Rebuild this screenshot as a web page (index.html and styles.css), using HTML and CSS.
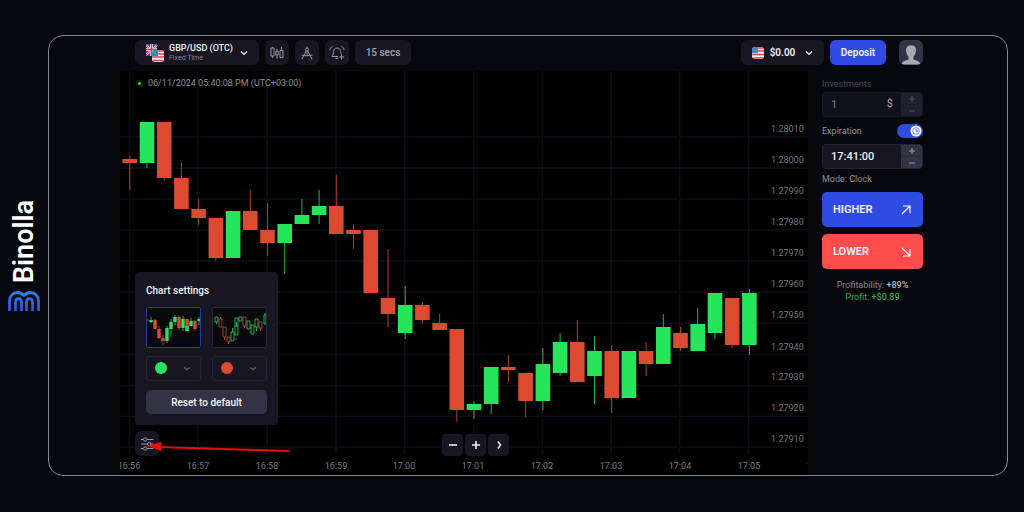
FILE: index.html
```html
<!DOCTYPE html>
<html lang="en">
<head>
<meta charset="utf-8">
<title>Binolla</title>
<meta name="viewport" content="width=device-width, initial-scale=1">
<link rel="stylesheet" href="styles.css">
</head>
<body>
<aside class="brand">
  <span class="brand-name">Binolla</span>
  <svg class="brand-logo" viewBox="0 0 32 20" aria-hidden="true">
    <defs><linearGradient id="logo" x1="0" y1="0" x2="0" y2="1"><stop offset="0" stop-color="#2b80e8"/><stop offset="1" stop-color="#3150e4"/></linearGradient></defs>
    <path d="M1.500 20V10C1.500 5 5 1.500 9.500 1.500C12.500 1.500 14.500 3 16 4.500C17.500 3 19.500 1.500 22.500 1.500C27 1.500 30.500 5 30.500 10V20M7.500 20V11C7.500 6.500 13.500 6.500 13.500 11V20M18.500 20V11C18.500 6.500 24.500 6.500 24.500 11V20" fill="none" stroke="url(#logo)" stroke-width="2.800"/>
  </svg>
</aside>
<main class="frame">
  <header class="topbar">
    <button class="pill pair" type="button">
      <svg class="flags" viewBox="0 0 18 18" aria-hidden="true">
        <rect width="11" height="12" rx="2" fill="#27479c"/>
        <path d="M0 1L11 11M11 1L0 11" stroke="#e8e9f2" stroke-width="2"/>
        <path d="M0 1L11 11M11 1L0 11" stroke="#d8364c" stroke-width="1"/>
        <path d="M5.500 0V12M0 5.500H11" stroke="#e8e9f2" stroke-width="3"/>
        <path d="M5.500 0V12M0 5.500H11" stroke="#d8364c" stroke-width="1.500"/>
        <rect x="6" y="6" width="12" height="12" rx="3" fill="#f1eef2"/>
        <path d="M8 7H17M6 10H18M6 13H18M7 16.500H17" stroke="#dc4155" stroke-width="1.600"/>
        <path d="M9 6H12V12H6V9A3 3 0 0 1 9 6Z" fill="#3f86c8"/>
      </svg>
      <span class="pair-text"><strong>GBP/USD (OTC)</strong><small>Fixed Time</small></span>
      <svg class="chev" viewBox="0 0 8 6" aria-hidden="true"><path d="M1 1.500L4 4.300L7 1.500"/></svg>
    </button>
    <button class="pill icon" type="button" aria-label="Chart type">
      <svg viewBox="0 0 16 16"><path d="M3.500 2V3M2 3H5V11H2ZM3.500 11V13M8 4V6.500M8 10V13.500M6.800 6.500H9.200V10H6.800ZM12.500 2V5M11 5.500H14V12.500H11Z"/></svg>
    </button>
    <button class="pill icon" type="button" aria-label="Drawing tools">
      <svg viewBox="0 0 16 16"><path d="M8 1.500V3M6.500 4.500A1.500 1.500 0 1 0 9.500 4.500A1.500 1.500 0 1 0 6.500 4.500M7.200 6L3 14M8.800 6L13 14M2.500 10C6 11 10 11 13.500 10M8 6V10.500"/></svg>
    </button>
    <button class="pill icon" type="button" aria-label="Add alert">
      <svg viewBox="0 0 16 16"><path d="M3 11.500H9M3 11.500C5 9 3.500 3 8 3C12 3 11.500 6 12 8.500M6.500 13.500H9M1 5C1 3.500 2 2 3.500 1.500M12.500 1.500C14 2 15 3.500 15 5M12.500 9.500V14.500M10 12H15"/></svg>
    </button>
    <button class="pill secs" type="button">15 secs</button>
    <button class="pill balance" type="button">
      <svg class="flag" viewBox="0 0 12 12" aria-hidden="true"><rect width="12" height="12" rx="3" fill="#f1eef2"/><path d="M2 1H11M0 4H12M0 7.500H12M1 11H11" stroke="#dc4155" stroke-width="1.700"/><path d="M3 0H6V6H0V3A3 3 0 0 1 3 0Z" fill="#3f86c8"/></svg>
      <strong>$0.00</strong>
      <svg class="chev" viewBox="0 0 8 6" aria-hidden="true"><path d="M1 1.500L4 4.300L7 1.500"/></svg>
    </button>
    <button class="deposit" type="button">Deposit</button>
    <button class="avatar" type="button" aria-label="Profile">
      <svg viewBox="0 0 25 25"><path d="M12.500 5C16.500 5 18 8 17.600 11.500C17.200 14 16 16 15 17V19.500C17 21 22 21 22 25H3C3 21 8 21 10 19.500V17C9 16 7.800 14 7.400 11.500C7 8 8.500 5 12.500 5Z"/></svg>
    </button>
  </header>

  <section class="chart">
    <svg class="plot" viewBox="120 71 688 404" role="img" aria-label="GBP/USD price chart">
      <path class="grid" d="M129.500 71V454M197.500 71V454M267 71V454M336 71V454M404.500 71V454M473.500 71V454M542.500 71V454M611 71V454M679.500 71V454M748.500 71V454M120 137H808M120 168H808M120 199H808M120 230H808M120 261H808M120 292H808M120 323H808M120 354.500H808M120 385.500H808M120 416.500H808M120 447H808"/>
      <path class="wick down" d="M129.800 156V190M164.200 170V181M181.400 162V200M198.600 199V225M215.900 230V261M250.300 190V225M267.500 203V256M336.300 175V210M353.500 224V249M388 249V327M422.400 302V323M439.600 314V325M456.800 400V422M508.400 355V382M525.600 390V417M577.300 320V350M611.700 345V413M646.100 342V376M680.500 327V351M732.200 340V348"/>
      <path class="wick up" d="M147 150V168M284.700 240V274M301.900 199V220M319.100 190V224M405.200 286V339M474 401V419M491.200 400V414M542.900 348V410M560.100 333V376M594.500 336V404M663.300 314V330M697.700 308V330M715 330V339M749.400 289V355"/>
      <path class="body down" d="M129.800 159V163M164.200 122V178M181.400 178V209M198.600 209V218M215.900 218V258M250.300 211V230M267.500 230V243M336.300 206V234M353.500 230V234M370.700 230V293M388 298V314M422.400 305V320M439.600 323V330M456.800 329V410M508.400 367V370M525.600 373V401M577.300 342V382M611.700 351V398M646.100 351V364M680.500 333V348M732.200 298V345"/>
      <path class="body up" d="M147 122V163M233.100 211V258M284.700 224V243M301.900 215V224M319.100 206V215M405.200 305V333M474 404V410M491.200 367V404M542.900 364V401M560.100 342V373M594.500 351V376M628.900 351V398M663.300 327V364M697.700 324V351M715 293V333M749.400 293V345"/>
      <g class="axis">
        <text x="771" y="132">1.28010</text><text x="771" y="163">1.28000</text><text x="771" y="194">1.27990</text><text x="771" y="225">1.27980</text><text x="771" y="256">1.27970</text><text x="771" y="287">1.27960</text><text x="771" y="318">1.27950</text><text x="771" y="350">1.27940</text><text x="771" y="380">1.27930</text><text x="771" y="411">1.27920</text><text x="771" y="442">1.27910</text>
      </g>
      <g class="axis time">
        <text x="129" y="469">16:56</text><text x="198" y="469">16:57</text><text x="267" y="469">16:58</text><text x="336" y="469">16:59</text><text x="404" y="469">17:00</text><text x="473" y="469">17:01</text><text x="542" y="469">17:02</text><text x="611" y="469">17:03</text><text x="680" y="469">17:04</text><text x="749" y="469">17:05</text><text x="818" y="469">17:06</text>
      </g>
    </svg>

    <p class="status"><i class="live"></i>06/11/2024 05:40:08 PM (UTC+03:00)</p>

    <div class="settings-dock">
      <form class="settings">
        <h2>Chart settings</h2>
        <div class="options">
          <button class="thumb selected" type="button" aria-label="Filled candles">
            <svg viewBox="0 0 53 39">
              <path class="mini down" d="M0 12H2M8 11V21M12 18V31M16 27V37M32 7V22M40 11V23M48 12V23"/>
              <path class="mini up" d="M4 9V15M20 18V35M24 11V29M28 7V17M36 8V23M44 10V18M52 9V17"/>
              <path class="fill down" d="M8 12V21M12 21V30M16 30V33M32 9V20M48 13V21M40 11V19"/>
              <path class="fill up" d="M4 12V14M20 20V33M24 14V21M28 9V14M36 11V20M40 18V23M44 13V18M52 11V13"/>
            </svg>
          </button>
          <button class="thumb" type="button" aria-label="Hollow candles">
            <svg viewBox="0 0 53 39">
              <path class="mini up" d="M2 9H5V14H2ZM3.500 14V16M18 24H21V33H18ZM19.500 20V24M22 18H25V27H22ZM23.500 14V18M22.500 31H24M22 18V10H25V18M26 9H29V13H26ZM34 13H37V21H34ZM38 17H41V26H38ZM42 11H45V19H42ZM43.500 19V23M51 7H53V16H51ZM52 5V7"/>
              <path class="mini down" d="M6 11H9V19H6ZM7.500 9V11M10 19H13V29H10ZM11.500 29V32M14 29H17V34H14ZM15.500 34V36M30 9H33V18H30ZM31.500 18V20M46 14H49V20H46ZM47.500 20V23"/>
            </svg>
          </button>
          <label class="colour"><select aria-label="Rising candle colour"><option value="green"></option></select><i class="dot green"></i><svg class="chev dim" viewBox="0 0 8 6"><path d="M1 1.500L4 3.500L7 1.500"/></svg></label>
          <label class="colour"><select aria-label="Falling candle colour"><option value="red"></option></select><i class="dot red"></i><svg class="chev dim" viewBox="0 0 8 6"><path d="M1 1.500L4 3.500L7 1.500"/></svg></label>
        </div>
        <button class="reset" type="reset">Reset to default</button>
      </form>
      <button class="pill icon" type="button" aria-label="Chart settings">
        <svg viewBox="0 0 16 16"><path d="M2 3.500H4.500M8 3.500H14.500M2 8H8.500M12 8H14.500M2 12.500H4.500M8 12.500H14.500"/><circle cx="6.200" cy="3.500" r="1.700"/><circle cx="10.200" cy="8" r="1.700"/><circle cx="6.200" cy="12.500" r="1.700"/></svg>
      </button>
    </div>

    <div class="zoom">
      <button type="button" aria-label="Zoom out"><svg viewBox="0 0 10 10"><path d="M1 5H9"/></svg></button>
      <button type="button" aria-label="Zoom in"><svg viewBox="0 0 10 10"><path d="M1 5H9M5 1V9"/></svg></button>
      <button type="button" aria-label="Latest"><svg viewBox="0 0 10 10"><path d="M4 1.500L6.500 5L4 8.500"/></svg></button>
    </div>

    <svg class="pointer" viewBox="0 0 144 12" aria-hidden="true"><path d="M10 5L142 9" stroke="#f30808" stroke-width="2"/><path d="M0 4L14 0V9Z" fill="#f30808"/></svg>
  </section>

  <form class="trade">
    <label class="caption muted" for="amount">Investments</label>
    <div class="field disabled">
      <input id="amount" value="1"><span class="unit">$</span>
      <span class="steps"><button type="button" aria-label="Increase investment"><svg viewBox="0 0 6 6"><path d="M0 3H6M3 0V6"/></svg></button><button type="button" aria-label="Decrease investment"><svg viewBox="0 0 6 6"><path d="M0 3H6"/></svg></button></span>
    </div>
    <div class="row">
      <label class="caption" for="expiry">Expiration</label>
      <span class="switch"><input type="checkbox" checked aria-label="Clock mode"><svg viewBox="0 0 12 12" aria-hidden="true"><circle cx="6" cy="6" r="5.500" fill="#fff"/><circle cx="6" cy="6" r="3.300" fill="none" stroke="#5a70e6" stroke-width=".9"/><path d="M6 4V6.200H7.800" fill="none" stroke="#3450e0" stroke-width=".9"/></svg></span>
    </div>
    <div class="field">
      <input id="expiry" value="17:41:00">
      <span class="steps"><button type="button" aria-label="Later"><svg viewBox="0 0 6 6"><path d="M0 3H6M3 0V6"/></svg></button><button type="button" aria-label="Earlier"><svg viewBox="0 0 6 6"><path d="M0 3H6"/></svg></button></span>
    </div>
    <p class="caption mode">Mode: Clock</p>
    <button class="order higher" type="button">HIGHER<svg viewBox="0 0 10 10"><path d="M1 9L9 1M2 1H9V8"/></svg></button>
    <button class="order lower" type="button">LOWER<svg viewBox="0 0 10 10"><path d="M1 1L9 9M9 2V9H2"/></svg></button>
    <p class="result">Profitability: <b>+89%</b></p>
    <p class="result profit">Profit: <b>+$0.89</b></p>
  </form>
</main>
</body>
</html>
```
FILE: styles.css
```css
* { box-sizing: border-box; }
body {
  margin: 0;
  min-height: 100vh;
  display: flex;
  padding: 35px 16px 36px 0;
  background: #07080d;
  color: #f2f2f6;
  font-family: Roboto, "Liberation Sans", sans-serif;
  font-size: 10px;
}
button, input, select { font: inherit; color: inherit; margin: 0; }
button { border: 0; padding: 0; cursor: pointer; }
svg { display: block; }
p, h2 { margin: 0; }

.brand {
  width: 48px;
  flex: none;
  display: flex;
  flex-direction: column;
  align-items: center;
  justify-content: center;
  gap: 8px;
}
.brand-name {
  writing-mode: vertical-rl;
  transform: rotate(180deg);
  font-size: 27px;
  font-weight: 600;
  line-height: 32px;
  color: #fff;
}
.brand-logo { width: 32px; height: 20px; }

.frame {
  flex: 1;
  display: grid;
  grid-template-columns: 71px 1fr 199px;
  grid-template-rows: auto 1fr;
  border: 1px solid #85868a;
  border-radius: 15px;
  overflow: hidden;
}

.topbar {
  grid-column: 1 / -1;
  display: flex;
  gap: 6px;
  padding: 4px 84px 6px 86px;
}
.pill {
  display: flex;
  align-items: center;
  justify-content: center;
  height: 25px;
  border-radius: 6px;
  background: #171622;
}
.pair { width: 124px; gap: 5px; }
.flags { width: 18px; height: 18px; }
.pair-text { width: 62px; display: flex; flex-direction: column; text-align: left; white-space: nowrap; line-height: 10px; }
.pair-text strong { font-size: 9px; font-weight: 500; }
.pair-text small { font-size: 7px; color: #858491; }
.chev { width: 8px; height: 6px; margin-left: 4px; fill: none; stroke: #e4e4ea; stroke-width: 1.4; }
.icon { width: 24px; }
.icon svg { width: 16px; height: 16px; fill: none; stroke: #9796a5; stroke-width: 1; }
.secs { width: 56px; color: #a3a2af; font-weight: 500; }
.balance { width: 83px; margin-left: auto; gap: 6px; }
.balance strong { font-weight: 600; }
.flag { width: 12px; height: 12px; }
.deposit { width: 56px; height: 25px; border-radius: 6px; background: #304be4; font-weight: 600; }
.avatar { width: 24px; height: 25px; margin-left: 7px; border-radius: 6px; background: #343346; overflow: hidden; }
.avatar svg { width: 24px; height: 25px; fill: #a9a8b6; }

.chart { grid-column: 2; position: relative; background: #000; }
.plot { width: 100%; height: 100%; }
.grid { fill: none; stroke: #0e0e18; stroke-width: 1.5; }
.wick { fill: none; stroke-width: 1; opacity: .8; }
.body { fill: none; stroke-width: 14.6; }
.down { stroke: #dc4b31; }
.up { stroke: #26e55a; }
.axis { fill: #777681; font-size: 9px; }
.time { text-anchor: middle; }

.status {
  position: absolute;
  left: 16px;
  top: 6px;
  display: flex;
  align-items: center;
  gap: 5px;
  font-size: 9px;
  line-height: 13px;
  color: #8f8e98;
  white-space: nowrap;
}
.live { width: 7px; height: 7px; border: 2px solid #07280d; border-radius: 50%; background: #43c552; }

.settings-dock { position: absolute; left: 15px; bottom: 19px; display: flex; flex-direction: column; gap: 6px; }
.settings { padding: 12px 11px 11px; border-radius: 4px; background: #171622; }
.settings h2 { font-size: 10px; font-weight: 500; line-height: 14px; }
.options { display: grid; grid-template-columns: 55px 55px; gap: 8px 11px; margin: 9px 0; }
.thumb { height: 41px; background: #08090d; border: 1px solid #292837; border-radius: 2px; }
.thumb.selected { border-color: #28399b; }
.thumb svg { width: 100%; height: 100%; }
.mini { fill: none; stroke-width: 1; opacity: .75; }
.fill { stroke-width: 3.4; }
.colour { position: relative; height: 25px; }
.colour select { width: 100%; height: 100%; appearance: none; background: #171622; border: 1px solid #252432; border-radius: 3px; }
.dot { position: absolute; left: 9px; top: 6px; width: 12px; height: 12px; border-radius: 50%; }
.green { background: #26e55a; }
.red { background: #dc4b31; }
.dim { position: absolute; right: 10px; top: 10px; stroke: #5e5d6c; }
.reset { width: 100%; height: 24px; border-radius: 5px; background: #343346; font-weight: 500; }

.zoom { position: absolute; left: 50%; bottom: 19px; margin-left: -22px; display: flex; gap: 2px; }
.zoom button { width: 21px; height: 22px; display: grid; place-items: center; border-radius: 4px; background: #171622; }
.zoom svg { width: 10px; height: 10px; fill: none; stroke: #f0f0f4; stroke-width: 1.6; }
.pointer { position: absolute; left: 27px; bottom: 21px; width: 144px; height: 12px; }

.trade { display: flex; flex-direction: column; padding: 7px 84px 0 14px; }
.caption { font-size: 9px; line-height: 13px; color: #91909d; }
.muted { color: #4b4a57; }
.field { display: flex; align-items: stretch; height: 25px; border: 1px solid #242331; border-radius: 4px; background: #171622; overflow: hidden; font-size: 11px; }
.field input { flex: 1; min-width: 0; padding: 0 0 0 8px; border: 0; background: none; outline: 0; font-weight: 500; }
.disabled { margin-top: 1px; background: #11111b; border-color: #1a1925; color: #7f7e8c; }
.disabled input { font-weight: 400; }
.unit { padding: 0 8px 0 0; line-height: 22px; color: #aaa9b4; }
.steps { width: 21px; display: grid; background: #2b2a3b; gap: 1px; }
.steps button { display: grid; place-items: center; background: #343346; }
.steps svg { width: 6px; height: 6px; fill: none; stroke: #9c9baa; }
.disabled .steps { background: #1b1a28; }
.disabled .steps button { background: #212030; }
.disabled .steps svg { stroke: #535262; }
.row { display: flex; align-items: center; justify-content: space-between; height: 14px; margin: 7px 0 6px; }
.switch { position: relative; width: 26px; height: 14px; }
.switch input { appearance: none; display: block; width: 26px; height: 14px; margin: 0; border-radius: 7px; background: #304be4; }
.switch svg { position: absolute; right: 1px; top: 1px; width: 12px; height: 12px; pointer-events: none; }
.mode { margin: 4px 0 6px; }
.order { display: flex; align-items: center; justify-content: space-between; height: 35px; padding: 0 12px 0 11px; margin-bottom: 7px; border-radius: 5px; font-size: 11px; font-weight: 600; }
.order svg { width: 10px; height: 10px; fill: none; stroke: #fff; stroke-width: 1.2; }
.higher { background: #304be4; }
.lower { background: #ff4c4c; }
.result { font-size: 9px; line-height: 12px; text-align: center; color: #858491; }
.result b { font-weight: 500; color: #bab9c3; }
.lower + .result { margin-top: 3px; }
.profit, .profit b { color: #38a648; }
```
